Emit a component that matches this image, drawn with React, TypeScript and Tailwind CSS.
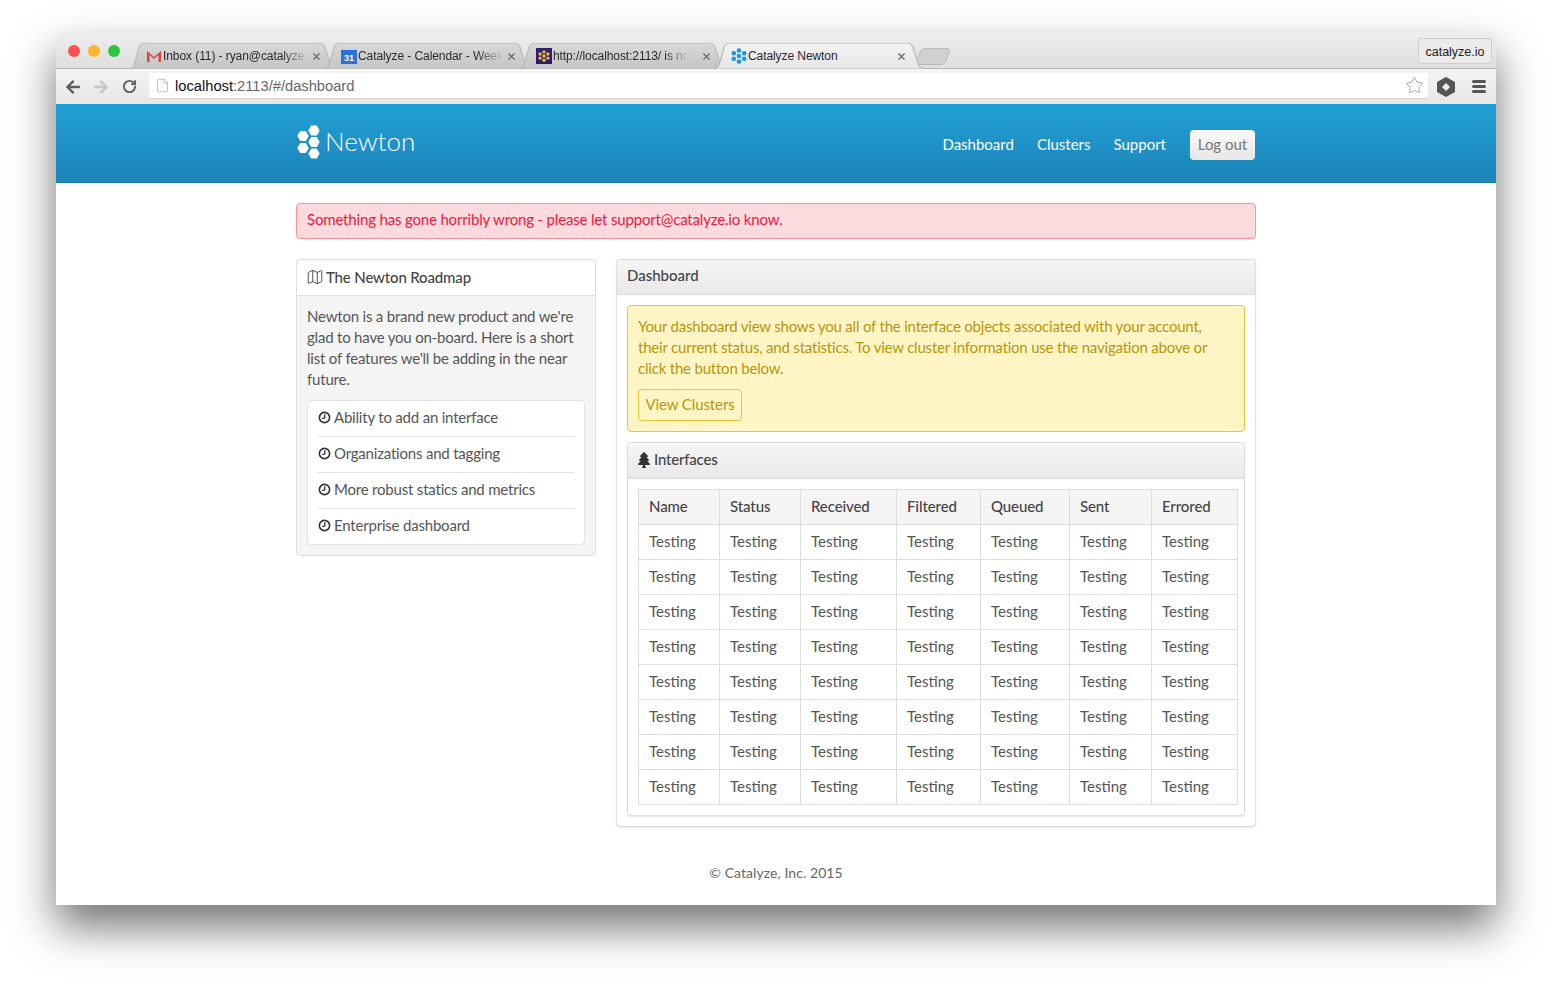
import React from 'react';
import { File, Map as MapIcon, RotateCw, Star, X } from 'lucide-react';
import { FaArrowLeft, FaArrowRight, FaTree } from 'react-icons/fa';

const columns = ['Name', 'Status', 'Received', 'Filtered', 'Queued', 'Sent', 'Errored'];
const roadmap = [
	'Ability to add an interface',
	'Organizations and tagging',
	'More robust statics and metrics',
	'Enterprise dashboard',
];

const HexLogo = ({ className }: { className: string }) => (
	<svg viewBox="0 0 24 34" className={className} fill="currentColor">
		<path d="M11.300 5.500 L14.200 0.500 L19.800 0.500 L22.700 5.500 L19.800 10.500 L14.200 10.500 Z" />
		<path d="M0.300 11 L3.200 6 L8.800 6 L11.700 11 L8.800 16 L3.200 16 Z" />
		<path d="M11.300 17 L14.200 12 L19.800 12 L22.700 17 L19.800 22 L14.200 22 Z" />
		<path d="M0.300 23 L3.200 18 L8.800 18 L11.700 23 L8.800 28 L3.200 28 Z" />
		<path d="M11.300 28.500 L14.200 23.500 L19.800 23.500 L22.700 28.500 L19.800 33.500 L14.200 33.500 Z" />
	</svg>
);

const DotCluster = ({ className }: { className: string }) => (
	<svg viewBox="0 0 16 16" className={className} fill="currentColor">
		<circle cx="8" cy="2.500" r="2.300" />
		<circle cx="8" cy="8" r="2.300" />
		<circle cx="8" cy="13.500" r="2.300" />
		<circle cx="2.800" cy="5.200" r="2.300" />
		<circle cx="13.200" cy="5.200" r="2.300" />
		<circle cx="2.800" cy="10.800" r="2.300" />
		<circle cx="13.200" cy="10.800" r="2.300" />
	</svg>
);

const ClockIcon = () => (
	<svg viewBox="0 0 24 24" className="w-[13px] h-[13px] shrink-0 text-[#333]" fill="none" stroke="currentColor" strokeWidth="3">
		<circle cx="12" cy="12" r="9.500" />
		<path d="M12.500 6v7l-5 1" strokeWidth="2.500" />
	</svg>
);

const GmailIcon = () => (
	<svg viewBox="0 0 16 14" className="w-[16px] h-[14px] shrink-0">
		<path d="M1 13V2l7 6 7-6v11h-2.500V6L8 10 3.500 6v7z" fill="#d9443a" />
	</svg>
);

const CalendarIcon = () => (
	<div className="w-[16px] h-[16px] shrink-0 bg-[#2f6fd8] text-white text-[9px] font-bold flex items-end justify-center leading-[11px] border-t-2 border-[#c9d3e6]">
		31
	</div>
);

const HexFavicon = () => (
	<div className="w-[16px] h-[16px] shrink-0 bg-[#2b1f6e] flex items-center justify-center">
		<DotCluster className="w-[12px] h-[12px] text-[#f2b73c]" />
	</div>
);

const Tab = ({
	title,
	icon,
	active,
	fade,
}: {
	title: string;
	icon: React.ReactNode;
	active?: boolean;
	fade?: boolean;
}) => (
	<div className={`relative h-[26px] flex items-center pl-[14px] ${active ? 'w-[198px] pr-[8px] z-10' : 'w-[195px] pr-[5px]'}`}>
		<svg viewBox="0 0 208 26" preserveAspectRatio="none" className="absolute top-0 h-full -left-[3px] w-[calc(100%+13px)]">
			<defs>
				<linearGradient id="tabOff" x1="0" y1="0" x2="0" y2="1">
					<stop offset="0" stopColor="#d9d9d9" />
					<stop offset="1" stopColor="#c5c5c5" />
				</linearGradient>
				<linearGradient id="tabOn" x1="0" y1="0" x2="0" y2="1">
					<stop offset="0" stopColor="#f3f3f3" />
					<stop offset="1" stopColor="#e7e7e7" />
				</linearGradient>
			</defs>
			<path
				d="M0 26 C4 25 5 22 6 19 L10 4 C11 1 13 0 16 0 L190 0 C193 0 195 1 196 4 L201 20 C202 24 204 25 208 26 Z"
				fill={active ? 'url(#tabOn)' : 'url(#tabOff)'}
				stroke="#b4b4b4"
				strokeWidth="1"
			/>
		</svg>
		<div className="relative flex items-center w-full gap-px">
			{icon}
			<span className="flex-1 min-w-0 text-[12px] tracking-[-0.08px] text-[#2a2a2a] whitespace-nowrap">
				<span className={fade ? '[mask-image:linear-gradient(to_right,black_82%,transparent)] inline-block' : ''}>
					{title}
				</span>
			</span>
			<X size={11} strokeWidth={2.500} className="shrink-0 text-[#666]" />
		</div>
	</div>
);

const NavLink = ({ label }: { label: string }) => (
	<a className="text-[15px] text-white -mt-[2px]">{label}</a>
);

const App = () => {
	return (
		<div className="h-[985px] bg-white pt-[32px] px-[56px] overflow-hidden font-['Lato','Noto_Sans',sans-serif] text-[#555]">
			<div className="h-[873px] bg-white rounded-t-[5px] shadow-[0_22px_44px_rgba(0,0,0,0.55)]">
				{/* browser chrome */}
				<div className="font-['Liberation_Sans',sans-serif]">
					<div className="h-[37px] rounded-t-[5px] bg-gradient-to-b from-[#eeeeee] to-[#dfdfdf] border-b border-[#b4b4b4] flex items-end pl-[12px] pr-[4px]">
						<div className="flex items-center gap-[8px] self-start mt-[13px]">
							<span className="w-[12px] h-[12px] rounded-full bg-[#f6544d]" />
							<span className="w-[12px] h-[12px] rounded-full bg-[#fbb82f]" />
							<span className="w-[12px] h-[12px] rounded-full bg-[#2ec440]" />
						</div>
						<div className="flex items-end ml-[12px] -mb-px">
							<Tab title="Inbox (11) - ryan@catalyze." icon={<GmailIcon />} fade />
							<Tab title="Catalyze - Calendar - Week" icon={<CalendarIcon />} fade />
							<Tab title="http://localhost:2113/ is no" icon={<HexFavicon />} fade />
							<Tab title="Catalyze Newton" icon={<DotCluster className="w-[16px] h-[16px] shrink-0 text-[#1b9ad6]" />} active />
							<div className="w-[30px] h-[17px] mb-[4px] ml-[3px] rounded-[4px] border border-[#b9b9b9] bg-[#d0d0d0] -skew-x-[20deg]" />
						</div>
						<div className="ml-auto self-start mt-[6px] w-[74px] h-[26px] rounded-[3px] border border-[#cfcfcf] bg-[#ebebeb] text-[12.500px] text-[#222] flex items-center justify-center pt-[2px]">
							catalyze.io
						</div>
					</div>
					<div className="h-[35px] bg-gradient-to-b from-[#f4f4f4] to-[#e6e6e6] flex items-center pl-[9px] pr-[10px]">
						<FaArrowLeft size={16} className="text-[#5f5f5f]" />
						<FaArrowRight size={16} className="ml-[12px] text-[#c6c6c6]" />
						<RotateCw size={15} strokeWidth={3} className="ml-[13px] text-[#5f5f5f]" />
						<div className="ml-[12px] flex-1 h-[26px] -mt-[1px] bg-white rounded-[2px] border-b border-[#cfcfcf] flex items-center pl-[6px] pr-[4px]">
							<File size={15} strokeWidth={1} className="text-[#999]" />
							<div className="ml-[5px] text-[14.700px] text-[#666] pt-[2px]">
								<span className="text-[#111]">localhost</span>:2113/#/dashboard
							</div>
							<Star size={19} strokeWidth={1} className="ml-auto text-[#8f8f8f]" />
						</div>
						<svg viewBox="0 0 20 20" className="ml-[8px] w-[20px] h-[20px]">
							<path d="M10 1 L18 5.500 L18 14.500 L10 19 L2 14.500 L2 5.500 Z" fill="#555" stroke="#555" strokeWidth="2" strokeLinejoin="round" />
							<path d="M10 6 L14 10 L10 14 L6 10 Z" fill="#eee" />
						</svg>
						<div className="ml-[16px] flex flex-col gap-[2px] w-[14px]">
							<span className="h-[3px] rounded-sm bg-[#555]" />
							<span className="h-[3px] rounded-sm bg-[#555]" />
							<span className="h-[3px] rounded-sm bg-[#555]" />
						</div>
					</div>
				</div>

				{/* site header */}
				<div className="h-[79px] bg-gradient-to-b from-[#219fd6] to-[#1c85b8] border-b border-[#1b7eae]">
					<div className="w-[960px] mx-auto h-full flex items-start justify-between">
						<div className="flex items-center mt-[20px] ml-px text-white">
							<HexLogo className="w-[24px] h-[34px]" />
							<div className="ml-[4px] text-[26px] font-light leading-[36px] -mt-[1px]">Newton</div>
						</div>
						<div className="flex items-center gap-[23px] mt-[26px] mr-px">
							<NavLink label="Dashboard" />
							<NavLink label="Clusters" />
							<NavLink label="Support" />
							<button className="ml-px w-[65px] h-[30px] rounded-[4px] bg-gradient-to-b from-[#fafafa] to-[#e6e6e6] text-[15px] text-[#777] pb-[2px]">
								Log out
							</button>
						</div>
					</div>
				</div>

				{/* page */}
				<div className="w-[960px] mx-auto pt-[20px] text-[15px] leading-[21px]">
					<div className="h-[36px] px-[10px] pb-[3px] flex items-center rounded-[4px] border border-[#f7909e] bg-[#fddadd] text-[#e8203f] tracking-[-0.17px]">
						Something has gone horribly wrong - please let support@catalyze.io know.
					</div>
					<div className="mt-[20px] flex items-start gap-[20px]">
						<div className="w-[300px] rounded-[4px] border border-[#ddd] bg-[#f5f5f5]">
							<div className="h-[36px] px-[10px] pb-[1px] flex items-center gap-[2px] rounded-t-[4px] bg-white border-b border-[#ddd] text-[#444] font-medium tracking-[-0.15px]">
								<MapIcon size={18} strokeWidth={1.250} className="-ml-px" />
								The Newton Roadmap
							</div>
							<div className="p-[10px] tracking-[-0.2px]">
								<p>
									Newton is a brand new product and we're glad to have you on-board. Here is a short list of
									features we'll be adding in the near future.
								</p>
								<ul className="mt-[10px] rounded-[4px] border border-[#e2e2e2] bg-white px-[10px]">
									{roadmap.map((item) => (
										<li
											key={item}
											className="h-[36px] last:h-[35px] pb-[2px] flex items-center gap-[3px] border-b border-[#e2e2e2] last:border-b-0"
										>
											<ClockIcon />
											{item}
										</li>
									))}
								</ul>
							</div>
						</div>

						<div className="w-[640px] rounded-[4px] border border-[#ddd] bg-white shadow-[0_1px_2px_rgba(0,0,0,0.1)]">
							<div className="h-[35px] px-[10px] pb-[3px] flex items-center rounded-t-[4px] bg-gradient-to-b from-[#f6f6f6] to-[#e8e8e8] border-b border-[#ddd] text-[#444] font-medium">
								Dashboard
							</div>
							<div className="p-[10px]">
								<div className="rounded-[4px] border border-[#e9c53c] bg-[#fff5c4] px-[10px] pt-[10px] pb-[10px] text-[#b4960f] tracking-[-0.2px]">
									<p>
										Your dashboard view shows you all of the interface objects associated with your account, their
										current status, and statistics. To view cluster information use the navigation above or click
										the button below.
									</p>
									<button className="mt-[10px] w-[104px] h-[32px] pb-[2px] rounded-[4px] border border-[#e9c53c] text-[#b4960f] tracking-[-0.1px]">
										View Clusters
									</button>
								</div>
								<div className="mt-[10px] rounded-[4px] border border-[#ddd] shadow-[0_1px_2px_rgba(0,0,0,0.1)]">
									<div className="h-[36px] px-[10px] pb-[2px] flex items-center rounded-t-[4px] bg-gradient-to-b from-[#f6f6f6] to-[#e8e8e8] border-b border-[#ddd] text-[#444] font-medium tracking-[-0.2px]">
										<FaTree size={16} className="-ml-[2px] mr-[2px] text-[#333]" />
										Interfaces
									</div>
									<div className="pl-[10px] pr-[6px] py-[10px]">
										<table className="w-[599px] table-fixed border-collapse">
											<colgroup>
												<col className="w-[81px]" />
												<col className="w-[81px]" />
												<col className="w-[96px]" />
												<col className="w-[84px]" />
												<col className="w-[89px]" />
												<col className="w-[82px]" />
												<col className="w-[86px]" />
											</colgroup>
											<thead>
												<tr className="bg-[#f5f5f5]">
													{columns.map((col) => (
														<th key={col} className="h-[35px] px-[10px] pb-[2px] border border-[#ddd] text-left font-medium text-[#444] tracking-[-0.1px]">
															{col}
														</th>
													))}
												</tr>
											</thead>
											<tbody>
												{[0, 1, 2, 3, 4, 5, 6, 7].map((row) => (
													<tr key={row}>
														{columns.map((col) => (
															<td key={col} className="h-[35px] px-[10px] pb-[2px] border border-[#ddd]">
																Testing
															</td>
														))}
													</tr>
												))}
											</tbody>
										</table>
									</div>
								</div>
							</div>
						</div>
					</div>
					<div className="mt-[35px] text-center text-[14px] tracking-[0.07px] text-[#666]">© Catalyze, Inc. 2015</div>
				</div>
			</div>
		</div>
	);
};

export default App;
